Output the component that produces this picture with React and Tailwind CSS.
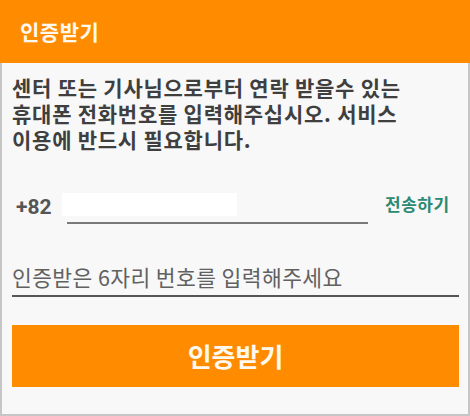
export default function App() {
  const kr = { fontFamily: '"Noto Sans CJK KR", "Noto Sans", sans-serif' };
  return (
    <div className="w-[470px] h-[416px] flex flex-col overflow-hidden" style={kr}>
      <div className="h-[63px] shrink-0 bg-[#ff8c00] flex items-center pl-[20px]">
        <span className="text-[21px] tracking-[0.5px] font-semibold text-[#fff8ee] leading-none">인증받기</span>
      </div>
      <div className="flex-1 flex flex-col bg-[#f8f8f8] border-x-2 border-b-2 border-[#c6c6c6] pl-[10px] pr-[9px]">
        <div className="mt-[11px] text-[21px] tracking-[0.75px] font-bold text-[#3f3f3f] whitespace-nowrap flex flex-col">
          <span className="leading-[26px]">센터 또는 기사님으로부터 연락 받을수 있는</span>
          <span className="leading-[26px]">휴대폰 전화번호를 입력해주십시오. 서비스</span>
          <span className="leading-[26px]">이용에 반드시 필요합니다.</span>
        </div>
        <div className="mt-[41px] flex items-start">
          <span
            className="mt-[2px] ml-[4px] w-[46px] text-[21px] font-bold text-[#555555] leading-[24px]"
            style={{ fontFamily: 'Roboto, "Noto Sans", sans-serif' }}
          >
            +82
          </span>
          <div className="w-[306px] flex flex-col">
            <div className="w-[175px] h-[23px] bg-white" />
            <div className="mt-[6px] ml-[5px] h-[2px] bg-[#7a7a7a]" />
          </div>
          <span className="ml-[17px] text-[17px] tracking-[0.5px] font-bold text-[#2c8a72] leading-[22px] whitespace-nowrap">전송하기</span>
        </div>
        <div className="mt-[39px] flex flex-col">
          <span className="text-[21.5px] tracking-[0.4px] text-[#616161] leading-[28px] whitespace-nowrap">인증받은 6자리 번호를 입력해주세요</span>
          <div className="mt-[4px] h-[2px] bg-[#555555]" />
        </div>
        <button className="mt-[28px] h-[62px] w-full bg-[#ff8c00] flex items-center justify-center">
          <span className="text-[26px] font-bold text-[#fff8ee] leading-none">인증받기</span>
        </button>
      </div>
    </div>
  );
}
